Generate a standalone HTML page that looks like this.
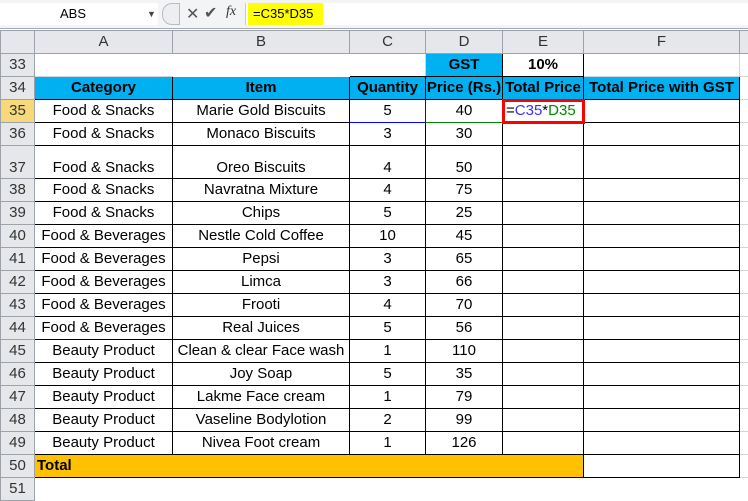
<!DOCTYPE html>
<html><head><style>
body{margin:0;width:748px;height:493px;overflow:hidden;background:#fff;font-family:"Liberation Sans",sans-serif;position:relative}
.fb{position:absolute;left:0;top:0;width:748px;height:28px;background:#f3f4f6;border-bottom:1px solid #a5acb5}
.nb{position:absolute;left:0;top:3px;width:158px;height:22px;background:#fff;font-size:13px;line-height:22px}
.fx{position:absolute;left:245px;top:3px;width:503px;height:22px;background:#fff;border-left:1px solid #c5c9cf}
table{position:absolute;left:0;top:30px;border-collapse:collapse;table-layout:fixed;width:759px}
tr{height:23px}
td{border:1px solid #d4d4d4;height:23px;box-sizing:border-box;line-height:20px;padding:0;font-size:15px;text-align:center;white-space:nowrap;overflow:hidden;color:#000}
tr.h td{background:#e5e7eb;color:#333;font-size:15px;border-color:#9ea3aa}
td.r{background:#e5e7eb;color:#333;border-color:#9ea3aa;text-align:center;font-size:15px}
td.k{border-color:#000}
td.bl{background:#00b0f0;font-weight:bold;border-color:#000}
td.sel{background:#f7d97b}
td.y{background:#ffc000;font-weight:bold;text-align:left;padding-left:2px;border-color:#000}
</style></head><body>
<div class="fb">
<div class="nb"><span style="position:absolute;left:60px">ABS</span><span style="position:absolute;left:147px;font-size:9px;color:#444">▼</span></div>
<div style="position:absolute;left:162px;top:3px;width:16px;height:20px;border:1px solid #b8bcc2;border-radius:10px 0 0 10px;background:#eceef1"></div>
<span style="position:absolute;left:186px;top:4px;font-size:16px;color:#555">✕</span>
<span style="position:absolute;left:204px;top:3px;font-size:16px;color:#555">✔</span>
<span style="position:absolute;left:226px;top:4px;font-size:14px;font-style:italic;font-family:'Liberation Serif',serif;color:#333">fx</span>
<div class="fx"><span style="position:absolute;left:2px;top:0;height:22px;width:75px;background:#ffff00;font-size:13px;line-height:22px;padding-left:5px;box-sizing:border-box">=C35*D35</span></div>
</div>
<table>
<colgroup><col style="width:34px"><col style="width:138px"><col style="width:177px"><col style="width:76px"><col style="width:77px"><col style="width:81px"><col style="width:156px"><col style="width:20px"></colgroup>
<tr class="h"><td style="background:#e5e7eb"></td><td>A</td><td>B</td><td>C</td><td>D</td><td class="sel" style="border-color:#9ea3aa">E</td><td>F</td><td></td></tr>
<tr><td class="r">33</td><td style="border-right-color:#fff"></td><td style="border-color:#fff"></td><td style="border-bottom-color:#000"></td><td class="bl">GST</td><td class="k" style="font-weight:bold">10%</td><td></td><td></td></tr>
<tr><td class="r">34</td><td class="bl">Category</td><td class="bl">Item</td><td class="bl">Quantity</td><td class="bl">Price (Rs.)</td><td class="bl">Total Price</td><td class="bl">Total Price with GST</td><td></td></tr>
<tr><td class="r sel">35</td><td class="k">Food &amp; Snacks</td><td class="k">Marie Gold Biscuits</td><td class="k" style="border:1px solid #00f">5</td><td class="k" style="border-top:1px solid #080;border-bottom:1px solid #080">40</td><td class="k" style="outline:3px solid #f00;outline-offset:-2px;text-align:left;padding-left:3px"><span>=</span><span style="color:#33f">C35</span>*<span style="color:#080">D35</span></td><td class="k"></td><td></td></tr>
<tr><td class="r">36</td><td class="k">Food &amp; Snacks</td><td class="k">Monaco Biscuits</td><td class="k">3</td><td class="k">30</td><td class="k"></td><td class="k"></td><td></td></tr>
<tr style="height:33px"><td class="r" style="vertical-align:bottom;height:33px">37</td><td class="k" style="vertical-align:bottom">Food &amp; Snacks</td><td class="k" style="vertical-align:bottom">Oreo Biscuits</td><td class="k" style="vertical-align:bottom">4</td><td class="k" style="vertical-align:bottom">50</td><td class="k"></td><td class="k"></td><td></td></tr>
<tr><td class="r">38</td><td class="k">Food &amp; Snacks</td><td class="k">Navratna Mixture</td><td class="k">4</td><td class="k">75</td><td class="k"></td><td class="k"></td><td></td></tr>
<tr><td class="r">39</td><td class="k">Food &amp; Snacks</td><td class="k">Chips</td><td class="k">5</td><td class="k">25</td><td class="k"></td><td class="k"></td><td></td></tr>
<tr><td class="r">40</td><td class="k">Food &amp; Beverages</td><td class="k">Nestle Cold Coffee</td><td class="k">10</td><td class="k">45</td><td class="k"></td><td class="k"></td><td></td></tr>
<tr><td class="r">41</td><td class="k">Food &amp; Beverages</td><td class="k">Pepsi</td><td class="k">3</td><td class="k">65</td><td class="k"></td><td class="k"></td><td></td></tr>
<tr><td class="r">42</td><td class="k">Food &amp; Beverages</td><td class="k">Limca</td><td class="k">3</td><td class="k">66</td><td class="k"></td><td class="k"></td><td></td></tr>
<tr><td class="r">43</td><td class="k">Food &amp; Beverages</td><td class="k">Frooti</td><td class="k">4</td><td class="k">70</td><td class="k"></td><td class="k"></td><td></td></tr>
<tr><td class="r">44</td><td class="k">Food &amp; Beverages</td><td class="k">Real Juices</td><td class="k">5</td><td class="k">56</td><td class="k"></td><td class="k"></td><td></td></tr>
<tr><td class="r">45</td><td class="k">Beauty Product</td><td class="k">Clean &amp; clear Face wash</td><td class="k">1</td><td class="k">110</td><td class="k"></td><td class="k"></td><td></td></tr>
<tr><td class="r">46</td><td class="k">Beauty Product</td><td class="k">Joy Soap</td><td class="k">5</td><td class="k">35</td><td class="k"></td><td class="k"></td><td></td></tr>
<tr><td class="r">47</td><td class="k">Beauty Product</td><td class="k">Lakme Face cream</td><td class="k">1</td><td class="k">79</td><td class="k"></td><td class="k"></td><td></td></tr>
<tr><td class="r">48</td><td class="k">Beauty Product</td><td class="k">Vaseline Bodylotion</td><td class="k">2</td><td class="k">99</td><td class="k"></td><td class="k"></td><td></td></tr>
<tr><td class="r">49</td><td class="k">Beauty Product</td><td class="k">Nivea Foot cream</td><td class="k">1</td><td class="k">126</td><td class="k"></td><td class="k"></td><td></td></tr>
<tr><td class="r">50</td><td class="y" colspan="5">Total</td><td class="k"></td><td></td></tr>
<tr><td class="r">51</td><td style="border-color:#fff"></td><td style="border-color:#fff"></td><td style="border-color:#fff"></td><td style="border-color:#fff"></td><td style="border-color:#fff"></td><td style="border-color:#fff"></td><td style="border-color:#fff"></td></tr>
</table>
</body></html>
